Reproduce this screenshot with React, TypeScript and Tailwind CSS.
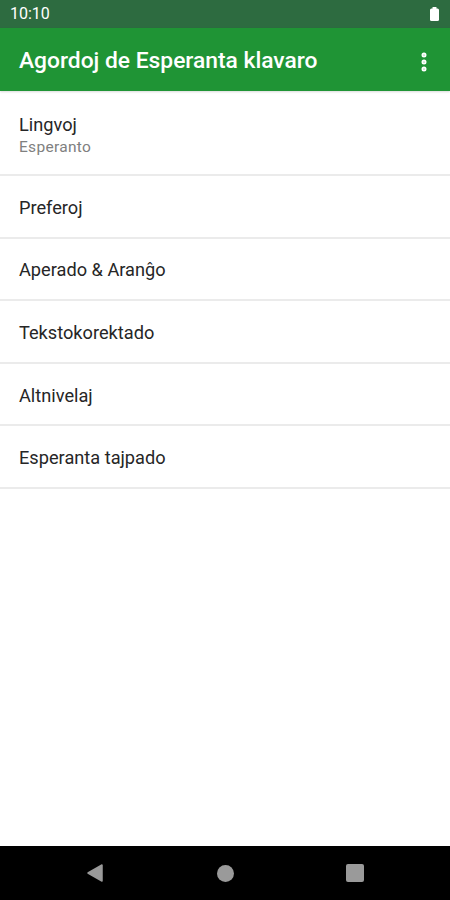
import { EllipsisVertical } from 'lucide-react';

const ITEMS = [
  { title: 'Lingvoj', summary: 'Esperanto' },
  { title: 'Preferoj' },
  { title: 'Aperado & Aranĝo' },
  { title: 'Tekstokorektado' },
  { title: 'Altnivelaj' },
  { title: 'Esperanta tajpado' },
];

export default function App() {
  return (
    <div className="flex h-[900px] w-[450px] flex-col bg-white font-['Roboto','Noto_Sans',sans-serif]">
      {/* status bar */}
      <div className="flex h-[28px] items-center justify-between bg-[#2d6b40] pl-[10px] pr-[10px] text-white">
        <span className="text-[16px] leading-none">10:10</span>
        <svg width="9" height="14" viewBox="0 0 9 14" className="mr-[1px]">
          <rect x="2.5" y="0" width="4" height="2" rx="0.5" fill="#fff" />
          <rect x="0" y="1.5" width="9" height="12.5" rx="1.5" fill="#fff" />
        </svg>
      </div>

      {/* app bar */}
      <div className="flex h-[63px] items-center justify-between bg-[#1f9435] pl-[19px] pr-[14px] pt-[4px] shadow-[0_1px_2px_rgba(0,0,0,0.15)]">
        <h1 className="text-[22.8px] font-medium text-white">Agordoj de Esperanta klavaro</h1>
        <EllipsisVertical size={24} strokeWidth={3} className="text-white" />
      </div>

      {/* preference list */}
      <div className="flex flex-col">
        {ITEMS.map((item, i) => (
          <div
            key={item.title}
            className={`flex flex-col justify-center border-b-2 border-[#ebebeb] px-[19px] ${
              i === 0 ? 'h-[85px] pt-[5px]' : 'h-[62.6px] pt-[3px]'
            }`}
          >
            <span className="text-[18.2px] leading-[24px] text-[#262626]">{item.title}</span>
            {item.summary && (
              <span className="text-[15.5px] leading-[21px] tracking-[0.3px] text-[#808080]">
                {item.summary}
              </span>
            )}
          </div>
        ))}
      </div>

      <div className="flex-1" />

      {/* navigation bar */}
      <div className="flex h-[54px] items-center justify-between bg-black px-[86px]">
        <svg width="18" height="18" viewBox="0 0 18 18">
          <path d="M16 1 L16 17 L2 9 Z" fill="#9a9a9a" stroke="#9a9a9a" strokeWidth="1.5" strokeLinejoin="round" />
        </svg>
        <div className="h-[17px] w-[17px] rounded-full bg-[#9a9a9a]" />
        <div className="h-[18px] w-[18px] rounded-[2px] bg-[#9a9a9a]" />
      </div>
    </div>
  );
}
